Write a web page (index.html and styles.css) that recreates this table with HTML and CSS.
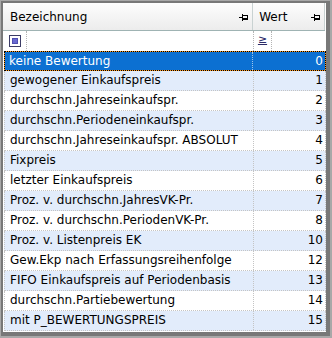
FILE: index.html
```html
<!DOCTYPE html>
<html>
<head>
<meta charset="utf-8">
<link rel="stylesheet" href="styles.css">
</head>
<body>
<div class="frame">
  <div class="inner">
    <div class="grid">
      <div class="hdr">
        <div class="hc c1"><span>Bezeichnung</span><svg class="pin" width="9" height="7" viewBox="0 0 9 7"><rect x="0" y="3" width="3" height="1"/><rect x="3" y="0" width="1" height="7"/><rect x="4" y="1" width="5" height="1"/><rect x="4" y="4" width="5" height="2"/><rect x="8" y="1" width="1" height="4"/></svg></div>
        <div class="hc c2"><span>Wert</span><svg class="pin" width="9" height="7" viewBox="0 0 9 7"><rect x="0" y="3" width="3" height="1"/><rect x="3" y="0" width="1" height="7"/><rect x="4" y="1" width="5" height="1"/><rect x="4" y="4" width="5" height="2"/><rect x="8" y="1" width="1" height="4"/></svg></div>
      </div>
      <div class="filter">
        <div class="fc c1"><span class="chk"><span class="chk-in"></span></span><span class="sep"></span></div>
        <div class="fc c2"><span class="op">≥</span><span class="sep"></span></div>
      </div>
      <div class="row sel"><div class="cell c1">keine Bewertung</div><div class="cell c2">0</div></div>
      <div class="row alt"><div class="cell c1">gewogener Einkaufspreis</div><div class="cell c2">1</div></div>
      <div class="row"><div class="cell c1">durchschn.Jahreseinkaufspr.</div><div class="cell c2">2</div></div>
      <div class="row alt"><div class="cell c1">durchschn.Periodeneinkaufspr.</div><div class="cell c2">3</div></div>
      <div class="row"><div class="cell c1">durchschn.Jahreseinkaufspr. ABSOLUT</div><div class="cell c2">4</div></div>
      <div class="row alt"><div class="cell c1">Fixpreis</div><div class="cell c2">5</div></div>
      <div class="row"><div class="cell c1">letzter Einkaufspreis</div><div class="cell c2">6</div></div>
      <div class="row alt"><div class="cell c1">Proz. v. durchschn.JahresVK-Pr.</div><div class="cell c2">7</div></div>
      <div class="row"><div class="cell c1">Proz. v. durchschn.PeriodenVK-Pr.</div><div class="cell c2">8</div></div>
      <div class="row alt"><div class="cell c1">Proz. v. Listenpreis EK</div><div class="cell c2">10</div></div>
      <div class="row"><div class="cell c1">Gew.Ekp nach Erfassungsreihenfolge</div><div class="cell c2">12</div></div>
      <div class="row alt"><div class="cell c1">FIFO Einkaufspreis auf Periodenbasis</div><div class="cell c2">13</div></div>
      <div class="row"><div class="cell c1">durchschn.Partiebewertung</div><div class="cell c2">14</div></div>
      <div class="row alt"><div class="cell c1">mit P_BEWERTUNGSPREIS</div><div class="cell c2">15</div></div>
    </div>
  </div>
</div>
</body>
</html>
```
FILE: styles.css
```css
html, body {
  margin: 0;
  padding: 0;
  background: #ffffff;
}
body {
  font-family: "DejaVu Sans", Tahoma, sans-serif;
  font-size: 12px;
  color: #000;
}
.frame {
  width: 332px;
  height: 338px;
  box-sizing: border-box;
  border-style: solid;
  border-color: #a8a8a8;
  border-width: 1px 2px 2px 1px;
}
.inner {
  box-sizing: border-box;
  height: 335px;
  border-style: solid;
  border-color: #787878;
  border-width: 2px 4px 4px 2px;
  background: #ffffff;
}
.grid {
  width: 322px;
  display: flex;
  flex-direction: column;
}
.c1 { width: 251px; }
.c2 { width: 71px; }
.hdr {
  display: flex;
  height: 28px;
  box-sizing: border-box;
  border-bottom: 1px solid #9fb3b3;
}
.hc {
  box-sizing: border-box;
  display: flex;
  align-items: center;
  justify-content: space-between;
  padding: 0 4px 0 7px;
  background: linear-gradient(#fdfdfd, #ececec);
  border-right: 1px solid #c9d2d2;
}
.hc.c2 {
  width: 72px;
  padding-left: 6px;
  border-right: 1px solid #c9d2d2;
}
.pin {
  fill: #000;
  display: block;
  margin-top: 1px;
}
.filter {
  display: flex;
  height: 20px;
}
.fc {
  box-sizing: border-box;
  display: flex;
  align-items: center;
}
.fc.c1 {
  padding-left: 6px;
  border-right: 1px dotted #b4b4b4;
}
.chk {
  box-sizing: border-box;
  width: 12px;
  height: 12px;
  border: 1px solid #3c3c66;
  background: #fff;
  padding: 2px;
  display: flex;
}
.chk-in {
  flex: 1;
  background: #6a6ad2;
  border: 1px solid #4f4fb0;
}
.sep {
  align-self: stretch;
  margin-left: 5px;
  border-left: 1px dotted #b4b4b4;
}
.op {
  width: 17px;
  text-align: center;
  color: #2b2b66;
  text-decoration: underline;
  font-size: 11px;
  margin-top: -3px;
}
.fc.c2 .sep { margin-left: 0; }
.row {
  display: flex;
  height: 20px;
  box-sizing: border-box;
  margin-left: 1px;
  width: 322px;
  border-bottom: 1px dotted #c4c4c4;
  border-left: 1px dotted #c4c4c4;
  border-right: 1px dotted #c4c4c4;
}
.row.alt { background: #e2ecfb; }
.cell {
  box-sizing: border-box;
  line-height: 19px;
  white-space: nowrap;
  overflow: hidden;
}
.row .c1 {
  width: 249px;
  padding-left: 5px;
  border-right: 1px dotted #c4c4c4;
}
.row .c2 {
  flex: 1;
  text-align: right;
  padding-right: 2px;
}
.row.sel {
  border: 1px dotted #000;
  background: linear-gradient(#0c70d2, #0c70d2) padding-box, linear-gradient(#ff9a1f, #ff9a1f) border-box;
  color: #fff;
}
.row.sel .cell { line-height: 18px; }
.row.sel .c1 { width: 248px; padding-left: 4px; border-right-color: #9cc3ea; }
```
